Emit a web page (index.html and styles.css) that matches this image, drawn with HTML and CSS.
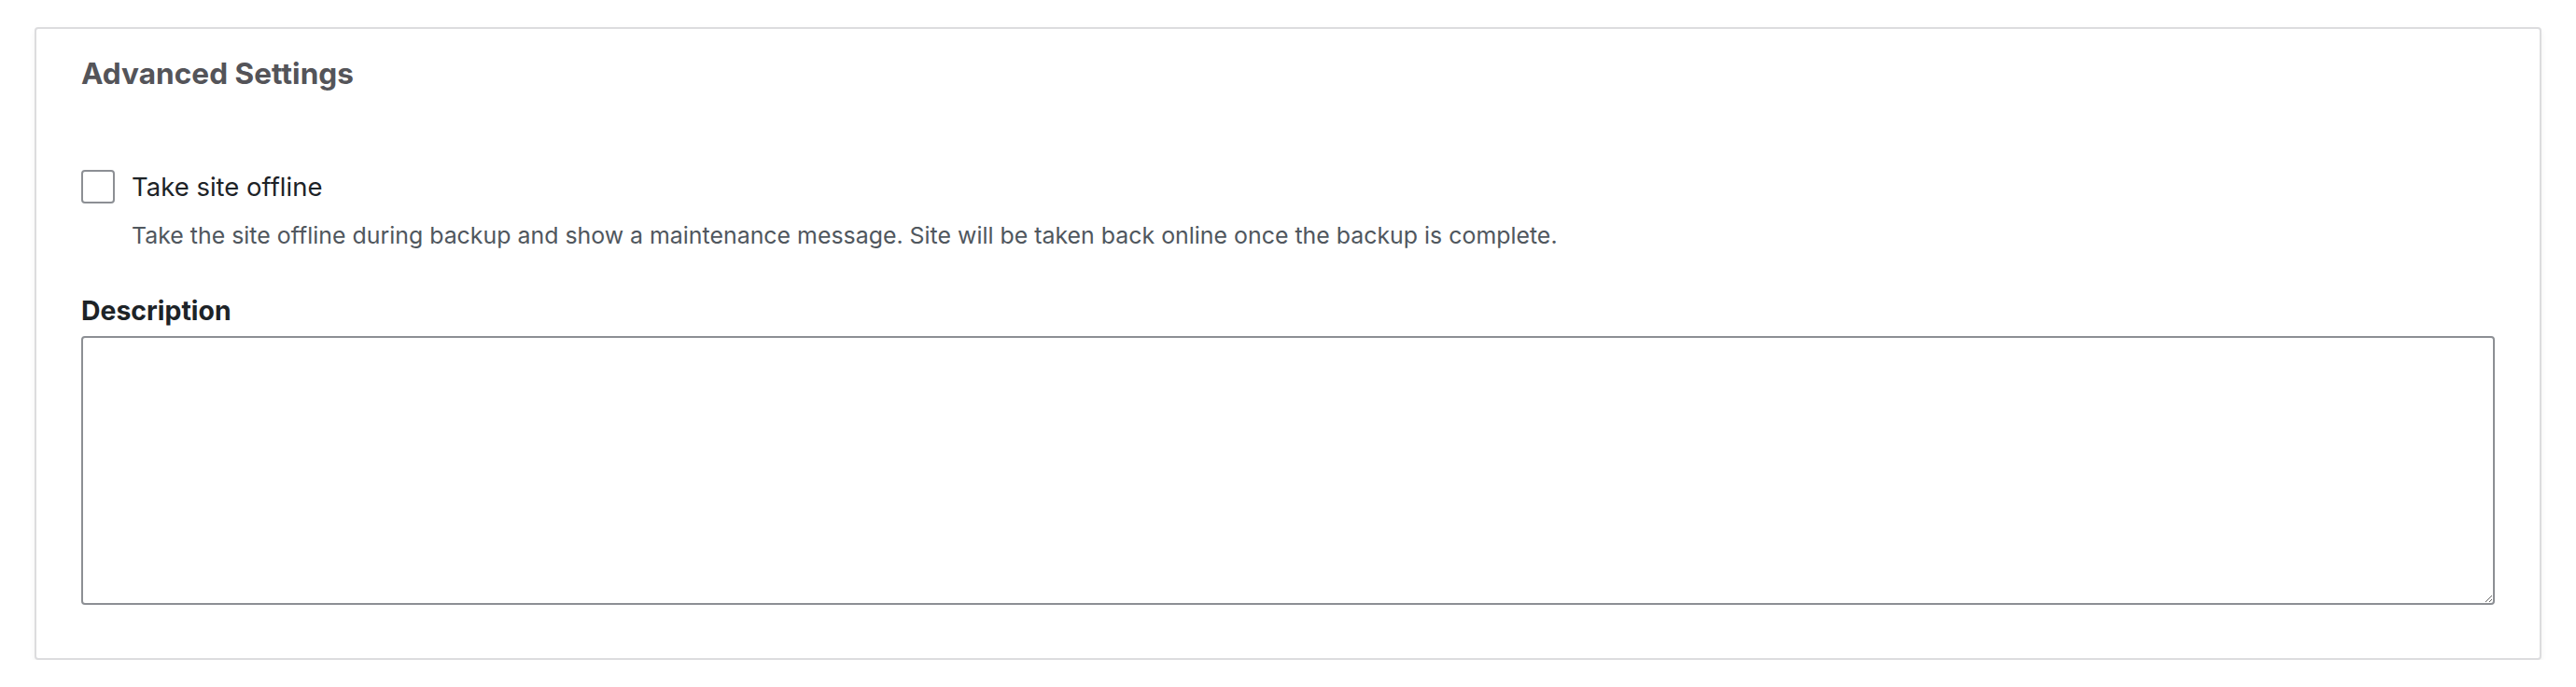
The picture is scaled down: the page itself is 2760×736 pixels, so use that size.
FILE: index.html
```html
<!DOCTYPE html>
<html lang="en">
<head>
<meta charset="utf-8">
<title>Advanced Settings</title>
<link rel="stylesheet" href="styles.css">
</head>
<body>
<section class="card">
  <h2 class="card-title">Advanced Settings</h2>
  <div class="option">
    <label class="check-row">
      <input type="checkbox" class="check">
      <span class="check-label">Take site offline</span>
    </label>
    <p class="help">Take the site offline during backup and show a maintenance message. Site will be taken back online once the backup is complete.</p>
  </div>
  <div class="field">
    <label class="field-label" for="desc">Description</label>
    <textarea id="desc" class="textarea"></textarea>
  </div>
</section>
</body>
</html>
```
FILE: styles.css
```css
html, body {
  margin: 0;
  padding: 0;
  background: #ffffff;
}
body {
  padding: 29px 37px 0 37px;
  font-family: Inter, "Noto Sans", "Liberation Sans", sans-serif;
  color: #1d2327;
}
.card {
  border: 2px solid #dcdcde;
  border-radius: 4px;
  background: #fff;
  box-shadow: 0 3px 6px rgba(0, 0, 0, 0.06);
  padding: 26px 48px 57px 48px;
  display: flex;
  flex-direction: column;
}
.card-title {
  margin: 0;
  font-size: 31.6px;
  line-height: 44px;
  font-weight: 700;
  color: #545459;
}
.option {
  margin-top: 80px;
  display: flex;
  flex-direction: column;
}
.check-row {
  display: flex;
  align-items: center;
  gap: 18px;
}
.check {
  appearance: none;
  -webkit-appearance: none;
  margin: 0;
  width: 36px;
  height: 36px;
  border: 2px solid #8c8f94;
  border-radius: 4px;
  background: #fff;
  box-sizing: border-box;
  flex: none;
}
.check-label {
  font-size: 27.5px;
  line-height: 38px;
  color: #1d2327;
}
.help {
  margin: 14px 0 0 54px;
  font-size: 24.9px;
  line-height: 38px;
  color: #50575e;
}
.field {
  margin-top: 43px;
  display: flex;
  flex-direction: column;
}
.field-label {
  font-size: 28.4px;
  line-height: 38px;
  font-weight: 700;
  color: #1d2327;
}
.textarea {
  margin-top: 8px;
  height: 288px;
  box-sizing: border-box;
  border: 2px solid #8c8f94;
  border-radius: 4px;
  background: #fff;
  resize: vertical;
  font-family: inherit;
  font-size: 28px;
  display: block;
  width: 100%;
}
```
